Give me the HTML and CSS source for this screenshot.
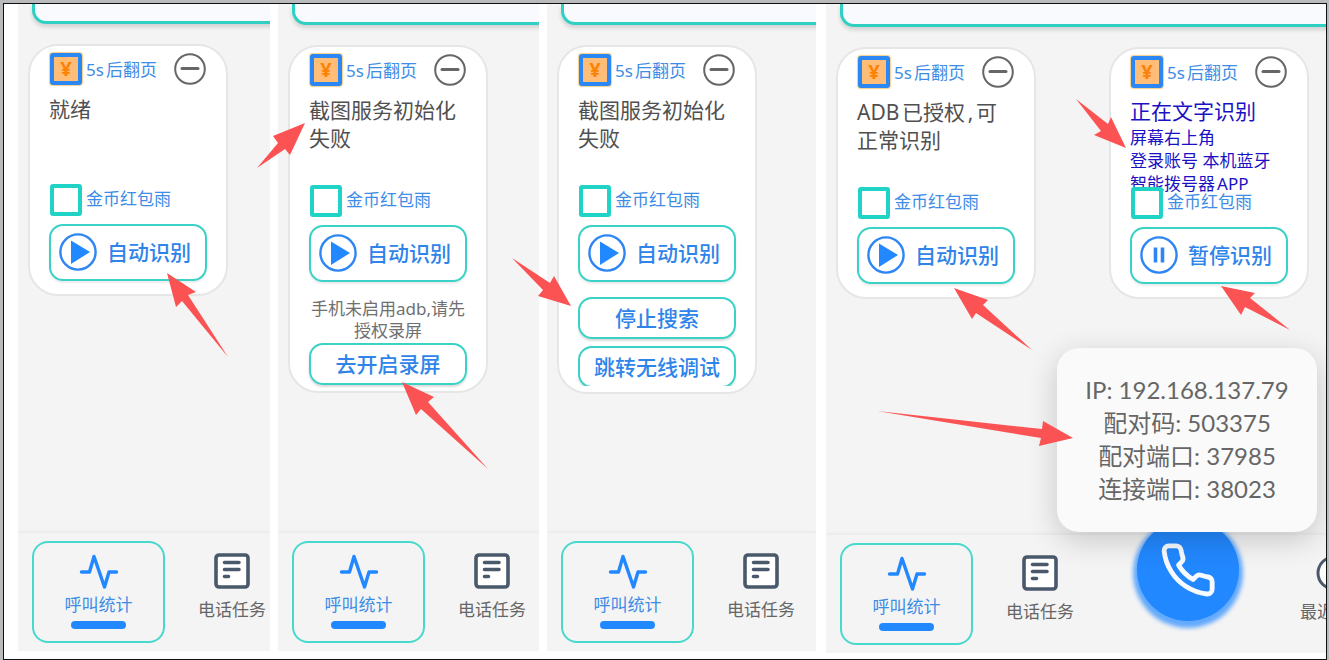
FILE: index.html
```html
<!DOCTYPE html>
<html lang="zh-CN">
<head>
<meta charset="utf-8">
<meta name="viewport" content="width=device-width, initial-scale=1">
<title>自动识别</title>
<link rel="stylesheet" href="styles.css">
</head>
<body>
<svg class="symbols" aria-hidden="true">
  <symbol id="pulse" viewBox="0 0 40 36"><path d="M2.500 19H10.500L15 3.500L25.500 34L30 19H37.500" fill="none" stroke="#2288ff" stroke-width="3.400" stroke-linecap="round" stroke-linejoin="round"/></symbol>
  <symbol id="tasks" viewBox="0 0 36 36"><rect x="2" y="2" width="32" height="32" rx="3" fill="#fff" stroke="#4a586b" stroke-width="3.600"/><path d="M10.500 9.500H25M10.500 16.500H25M10.500 23.500H14.500" stroke="#4a586b" stroke-width="3.600" stroke-linecap="round"/></symbol>
  <symbol id="minus" viewBox="0 0 32 32"><circle cx="16" cy="16" r="14.800" fill="#fff" stroke="#666" stroke-width="2"/><path d="M8 15.500H24" stroke="#666" stroke-width="3" stroke-linecap="round"/></symbol>
  <symbol id="play" viewBox="0 0 38 38"><circle cx="19" cy="19" r="17.600" fill="#fff" stroke="#2e86f4" stroke-width="2.400"/><path d="M12 7.500L31 19L12 31Z" fill="#2288ff"/></symbol>
  <symbol id="pause" viewBox="0 0 38 38"><circle cx="19" cy="19" r="17.600" fill="#fff" stroke="#2e86f4" stroke-width="2.400"/><path d="M15.500 11.500V26.500M22.500 11.500V26.500" stroke="#2e86f4" stroke-width="3.600"/></symbol>
</svg>
<main class="frame">
  <section class="phone phone-a">
    <div class="banner"></div>
    <div class="cards">
      <article class="card">
        <header class="card-head"><span class="coin">¥</span><span class="caption">5s后翻页</span><button class="minus" aria-label="收起"><svg><use href="#minus"/></svg></button></header>
        <p class="status">就绪</p>
        <label class="option"><input type="checkbox"><span>金币红包雨</span></label>
        <button class="action"><svg><use href="#play"/></svg><span>自动识别</span></button>
      </article>
    </div>
    <nav class="tabs">
      <button class="tab active"><svg class="pulse"><use href="#pulse"/></svg><span>呼叫统计</span><i class="bar"></i></button>
      <button class="tab"><svg class="tab-icon"><use href="#tasks"/></svg><span>电话任务</span></button>
    </nav>
  </section>

  <section class="phone phone-b">
    <div class="banner"></div>
    <div class="cards">
      <article class="card extended">
        <header class="card-head"><span class="coin">¥</span><span class="caption">5s后翻页</span><button class="minus" aria-label="收起"><svg><use href="#minus"/></svg></button></header>
        <p class="status">截图服务初始化失败</p>
        <label class="option"><input type="checkbox"><span>金币红包雨</span></label>
        <button class="action"><svg><use href="#play"/></svg><span>自动识别</span></button>
        <p class="note">手机未启用adb,请先授权录屏</p>
        <button class="link-button">去开启录屏</button>
      </article>
    </div>
    <nav class="tabs">
      <button class="tab active"><svg class="pulse"><use href="#pulse"/></svg><span>呼叫统计</span><i class="bar"></i></button>
      <button class="tab"><svg class="tab-icon"><use href="#tasks"/></svg><span>电话任务</span></button>
    </nav>
  </section>

  <section class="phone phone-c">
    <div class="banner"></div>
    <div class="cards">
      <article class="card extended">
        <header class="card-head"><span class="coin">¥</span><span class="caption">5s后翻页</span><button class="minus" aria-label="收起"><svg><use href="#minus"/></svg></button></header>
        <p class="status">截图服务初始化失败</p>
        <label class="option"><input type="checkbox"><span>金币红包雨</span></label>
        <button class="action"><svg><use href="#play"/></svg><span>自动识别</span></button>
        <div class="stack">
          <button class="link-button">停止搜索</button>
          <button class="link-button">跳转无线调试</button>
        </div>
      </article>
    </div>
    <nav class="tabs">
      <button class="tab active"><svg class="pulse"><use href="#pulse"/></svg><span>呼叫统计</span><i class="bar"></i></button>
      <button class="tab"><svg class="tab-icon"><use href="#tasks"/></svg><span>电话任务</span></button>
    </nav>
  </section>

  <section class="phone phone-d">
    <div class="banner wide"></div>
    <div class="cards">
      <article class="card">
        <header class="card-head"><span class="coin">¥</span><span class="caption">5s后翻页</span><button class="minus" aria-label="收起"><svg><use href="#minus"/></svg></button></header>
        <p class="status">ADB已授权,可正常识别</p>
        <label class="option"><input type="checkbox"><span>金币红包雨</span></label>
        <button class="action"><svg><use href="#play"/></svg><span>自动识别</span></button>
      </article>
      <article class="card">
        <header class="card-head"><span class="coin">¥</span><span class="caption">5s后翻页</span><button class="minus" aria-label="收起"><svg><use href="#minus"/></svg></button></header>
        <div class="status working"><strong>正在文字识别</strong><p>屏幕右上角<br>登录账号 本机蓝牙<br>智能拨号器APP</p></div>
        <label class="option"><input type="checkbox"><span>金币红包雨</span></label>
        <button class="action"><svg><use href="#pause"/></svg><span>暂停识别</span></button>
      </article>
    </div>
    <nav class="tabs">
      <button class="tab active"><svg class="pulse"><use href="#pulse"/></svg><span>呼叫统计</span><i class="bar"></i></button>
      <button class="tab"><svg class="tab-icon"><use href="#tasks"/></svg><span>电话任务</span></button>
      <button class="call" aria-label="拨号"><svg viewBox="0 0 24 24"><path d="M22 16.920v3a2 2 0 0 1-2.180 2 19.790 19.790 0 0 1-8.630-3.070 19.500 19.500 0 0 1-6-6A19.790 19.790 0 0 1 2.120 4.180 2 2 0 0 1 4.110 2h3a2 2 0 0 1 2 1.720c.127.960.361 1.903.700 2.810a2 2 0 0 1-.450 2.110L8.090 9.910a16 16 0 0 0 6 6l1.270-1.270a2 2 0 0 1 2.110-.450c.907.339 1.850.573 2.810.700A2 2 0 0 1 22 16.920z" fill="none" stroke="#f7faff" stroke-width="2" stroke-linejoin="round"/></svg></button>
      <button class="tab"><svg class="tab-icon" viewBox="0 0 36 36"><circle cx="18" cy="18" r="16" fill="#fff" stroke="#4a586b" stroke-width="3"/><path d="M18 9V18L24 22" fill="none" stroke="#4a586b" stroke-width="3"/></svg><span>最近通话</span></button>
    </nav>
    <div class="toast" role="status">IP: 192.168.137.79<br>配对码: 503375<br>配对端口: 37985<br>连接端口: 38023</div>
  </section>
</main>
<svg class="arrows" viewBox="0 0 1329 660" aria-hidden="true">
  <path d="M167 273L196 292L188 295L228 357L182 301L176 307Z"/>
  <path d="M305 123L290 155L285 149L257 168L278 143L273 136Z"/>
  <path d="M402 382L434 397L428 402L488 469L421 409L416 415Z"/>
  <path d="M571 306L538 296L543 290L512 258L550 283L554 276Z"/>
  <path d="M954 288L988 300L983 305L1032 350L976 313L972 319Z"/>
  <path d="M1126 148L1094 135L1101 131L1076 99L1108 124L1111 117Z"/>
  <path d="M1221 286L1255 293L1250 298L1290 330L1245 307L1241 315Z"/>
  <path d="M1073 438L1039 446L1041 438L877 411L1042 429L1043 421Z"/>
</svg>
</body>
</html>
```

FILE: styles.css
```css
* {
  box-sizing: border-box;
}

body {
  margin: 0;
  padding: 3px 2px 0 3px;
  background: #b9babc;
  color: #555;
  font-family: "Noto Sans", "Noto Sans CJK SC", sans-serif;
  text-autospace: normal;
}

p {
  margin: 0;
}

button {
  margin: 0;
  padding: 0;
  border: 0;
  background: none;
  color: inherit;
  font: inherit;
}

svg {
  display: block;
}

.symbols {
  position: absolute;
  width: 0;
  height: 0;
}

.frame {
  display: grid;
  grid-template-columns: 252fr 261fr 271fr 500fr;
  column-gap: 8px;
  min-height: calc(100vh - 3px);
  padding-left: 14px;
  border: 1px solid #111;
  background: #fff;
}

.phone {
  position: relative;
  display: flex;
  flex-direction: column;
  min-width: 0;
  overflow: hidden;
  background: #f4f4f4;
}

.phone-a,
.phone-b {
  margin-bottom: 8px;
}

.phone-c {
  margin-right: 2px;
  margin-bottom: 8px;
}

.phone-d {
  margin-bottom: 6px;
}

.banner {
  height: 20px;
  margin: 0 -20px 0 14px;
  border: 3px solid #2fd0c3;
  border-top: 0;
  border-radius: 0 0 14px 14px;
  background: #f8fafd;
  box-shadow: 0 3px 4px #00000024;
}

.phone-b .banner,
.phone-c .banner {
  height: 21px;
}

.banner.wide {
  height: 23px;
}

.cards {
  display: flex;
  flex: 1;
  align-items: flex-start;
  gap: 73px;
  padding: 20px 10px;
}

.card {
  flex: none;
  width: 200px;
  padding: 7px 19px 13px;
  border: 2px solid #e6e6e6;
  border-radius: 30px;
  background: #fff;
}

.card.extended {
  padding-bottom: 6px;
}

.card-head {
  display: flex;
  align-items: center;
  gap: 4px;
  padding: 0 1px;
  color: #3d8ce6;
  font-size: 17px;
}

.caption {
  flex: 1;
  padding-bottom: 2px;
  white-space: nowrap;
}

.coin {
  width: 32px;
  height: 32px;
  border: 4px solid #2b87f3;
  border-radius: 3px;
  background: #ffbd78;
  box-shadow: 0 0 1px 1px #f6cf8a;
  color: #fb8205;
  font-size: 20px;
  font-weight: 700;
  line-height: 23px;
  text-align: center;
}

.minus svg {
  width: 32px;
  height: 32px;
}

.status {
  height: 89px;
  margin-top: 10px;
  padding-right: 10px;
  color: #505050;
  font-size: 21px;
  line-height: 28px;
}

.working {
  color: #1a10c4;
}

.working strong {
  display: block;
  margin-bottom: 2px;
  font-weight: 400;
  line-height: 26px;
}

.working p {
  font-size: 17px;
  line-height: 23px;
  white-space: nowrap;
}

.option {
  position: relative;
  display: flex;
  align-items: center;
  gap: 4px;
  padding: 0 1px;
  color: #3d8ce6;
  font-size: 17px;
}

.option span {
  padding-bottom: 5px;
}

.option input {
  width: 32px;
  height: 32px;
  margin: 0;
  border: 4px solid #1fd3c6;
  border-radius: 3px;
  background: #fff;
  appearance: none;
}

.action {
  display: flex;
  align-items: center;
  gap: 10px;
  width: 100%;
  height: 57px;
  margin-top: 8px;
  padding: 0 0 2px 8px;
  border: 2px solid #3ad2c6;
  border-radius: 14px;
  color: #2f84ea;
  font-size: 21px;
  font-weight: 500;
  box-shadow: 0 2px 2px #00000014;
}

.action span {
  padding-bottom: 2px;
}

.action svg {
  width: 38px;
  height: 38px;
}

.note {
  margin-top: 16px;
  margin-bottom: 1px;
  color: #707070;
  font-size: 17px;
  line-height: 22px;
  text-align: center;
  text-autospace: no-autospace;
}

.link-button {
  display: block;
  flex: none;
  width: 100%;
  height: 42px;
  border: 2px solid #3ad2c6;
  border-radius: 14px;
  color: #2f84ea;
  font-size: 21px;
  font-weight: 500;
  line-height: 36px;
  box-shadow: 0 2px 2px #00000024;
}

.stack {
  display: flex;
  flex-direction: column;
  gap: 7px;
  height: 89px;
  margin-top: 15px;
  overflow: hidden;
}

.tabs {
  display: flex;
  gap: 33px;
  height: 118px;
  padding: 8px 0 8px 14px;
  box-shadow: 0 -2px 3px #0000000a;
}

.tab {
  display: flex;
  flex: none;
  flex-direction: column;
  align-items: center;
  width: 68px;
  padding-top: 12px;
  color: #666;
  font-size: 17px;
  line-height: 24px;
  white-space: nowrap;
}

.tab-icon {
  width: 36px;
  height: 36px;
  margin-bottom: 9px;
}

.tab.active {
  width: 133px;
  padding-top: 10px;
  border: 2px solid #48d9cd;
  border-radius: 16px;
  color: #3d8ce6;
}

.pulse {
  width: 40px;
  height: 36px;
  margin-bottom: 4px;
}

.bar {
  width: 55px;
  height: 8px;
  margin-top: 4px;
  border-radius: 4px;
  background: #2288ff;
}

.call {
  display: grid;
  flex: none;
  place-items: center;
  width: 102px;
  height: 102px;
  margin: -24px 28px 0 30px;
  border-radius: 50%;
  background: #2288ff;
  box-shadow: 0 3px 4px 4px #2288ffb0;
}

.call svg {
  width: 58px;
  height: 58px;
}

.toast {
  position: absolute;
  right: 9px;
  bottom: 121px;
  width: 260px;
  padding: 25px 0 27px;
  border-radius: 22px;
  background: #fafafa;
  box-shadow: 0 8px 30px #00000030;
  color: #666;
  font-family: Lato, "Noto Sans CJK SC", sans-serif;
  font-size: 24px;
  line-height: 33px;
  text-align: center;
  text-autospace: no-autospace;
}

.arrows {
  position: absolute;
  top: 0;
  left: 0;
  width: 100%;
  fill: #fb5353;
  pointer-events: none;
}
```
